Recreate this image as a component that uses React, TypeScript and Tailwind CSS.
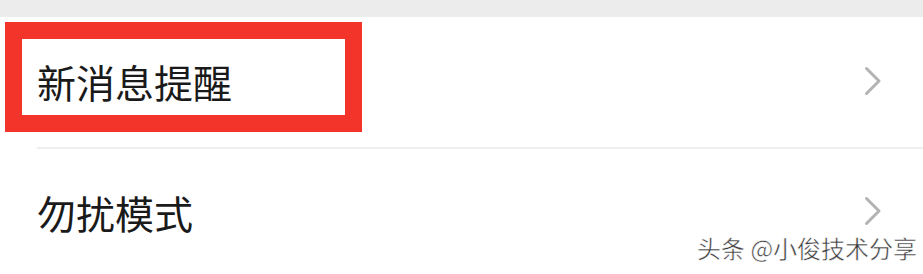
import React from "react";

const Chevron = () => (
  <svg width="18" height="30" viewBox="0 0 18 30" fill="none">
    <path d="M2.5 2.5 L15 15 L2.5 27.5" stroke="#b3b3b3" strokeWidth="3" strokeLinecap="round" strokeLinejoin="round" />
  </svg>
);

export default function App() {
  const font = { fontFamily: '"Noto Sans CJK SC", "Noto Sans", sans-serif' };
  return (
    <div className="relative w-[923px] h-[274px] overflow-hidden bg-white" style={font}>
      <div className="h-[17px] bg-[#ececec]" />
      <div className="flex flex-col">
        <div className="h-[130px] flex items-center justify-between pl-[37px] pr-[41px]">
          <span className="text-[39px] leading-none text-[#1a1a1a] -mt-[1px]">新消息提醒</span>
          <div className="-mt-[2px]"><Chevron /></div>
        </div>
        <div className="ml-[37px] h-[2px] bg-[#efefef]" />
        <div className="h-[130px] flex items-center justify-between pl-[37px] pr-[41px]">
          <span className="text-[39px] leading-none text-[#1a1a1a] -mt-[4px]">勿扰模式</span>
          <div className="-mt-[6px]"><Chevron /></div>
        </div>
      </div>
      <div className="absolute left-[5px] top-[22px] w-[357px] h-[110px] border-[17px] border-[#f3342a]" />
      <div
        className="absolute left-[697px] top-[236px] text-[24px] leading-none text-[#3a3a3a] whitespace-nowrap"
        style={{ WebkitTextStroke: "0.5px #ffffff" }}
      >
        头条 @小俊技术分享
      </div>
    </div>
  );
}
